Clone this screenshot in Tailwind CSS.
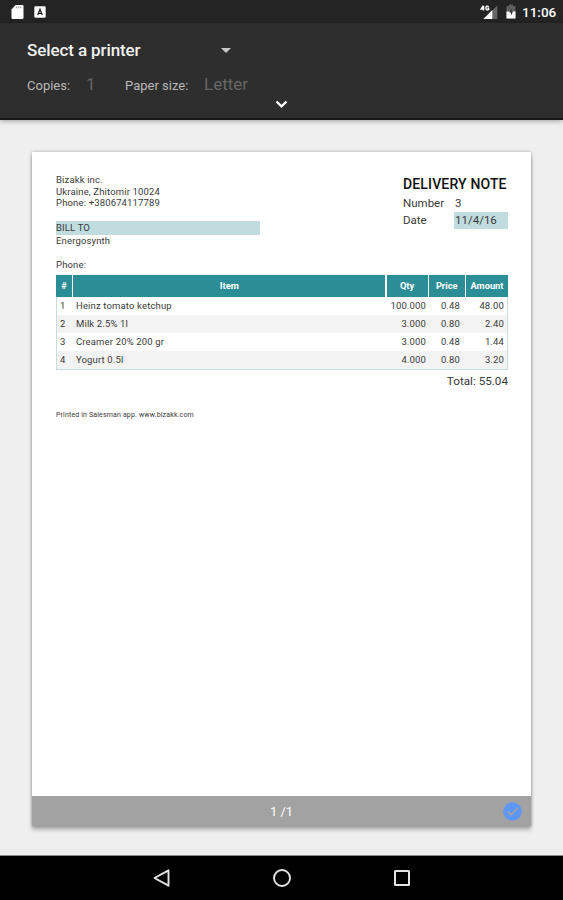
<!DOCTYPE html>
<html lang="en">
<head>
<meta charset="utf-8">
<title>Print preview</title>
<script src="https://cdn.jsdelivr.net/npm/@tailwindcss/browser@4"></script>
</head>
<body class="w-[563px] h-[900px] overflow-hidden bg-[#efefef] font-[Roboto,sans-serif] flex flex-col">
  <!-- Status bar -->
  <div class="h-[23px] shrink-0 bg-[#242424] flex items-center text-white pl-[11px] pr-[7px]">
    <svg class="w-[13px] h-[16px]" viewBox="0 0 13 16"><path d="M4.5 1H11.5Q12.5 1 12.5 2V14Q12.5 15 11.5 15H1.5Q.5 15 .5 14V5.5Z" fill="#fff"/><path d="M5.5 2.6v1.6M7.7 2.6v1.6M9.9 2.6v1.6" stroke="#999" stroke-width="1.2"/></svg>
    <svg class="w-[12px] h-[12px] ml-[10px]" viewBox="0 0 12 12"><rect x=".3" y=".3" width="11.4" height="11.4" rx="1.2" fill="#fff"/><path d="M3.7 9 6 3.2 8.3 9M4.5 7.3h3" fill="none" stroke="#242424" stroke-width="1.3"/></svg>
    <svg class="w-[18px] h-[16px] ml-auto" viewBox="0 0 18 16"><path d="M17.3 1.5V15H3.5Z" fill="#666"/><path d="M12.3 6V15H3.5Z" fill="#fff"/><path d="M3.3 1.6 1.2 5h3.2M3.5 2v4.6M8.8 2.6Q6.2 1.2 5.9 4 6 6.7 8.6 5.7V4.2H7.4" fill="none" stroke="#fff" stroke-width="1.4"/></svg>
    <svg class="w-[10px] h-[15px] ml-[8px]" viewBox="0 0 10 15"><path d="M3 .5H7V2H9.5V14.5H.5V2H3Z" fill="#5e5e5e"/><path d="M.5 7.5H9.5V14.5H.5Z" fill="#fff"/><path d="M5.5 4.5 3.2 8.6H5V11.5L7 7.5H5.5Z" fill="#242424"/></svg>
    <span class="ml-[6px] w-[34px] text-[13.5px] leading-[16px] font-medium whitespace-nowrap pt-px">11:06</span>
  </div>
  <!-- Print options -->
  <header class="h-[97px] shrink-0 bg-[#2e2e2e] border-b-2 border-[#181818] shadow-[0_1px_5px_rgba(0,0,0,0.35)] flex flex-col">
    <div class="mt-[17px] h-[20px] pl-[27px] flex items-center">
      <span class="w-[194px] text-[17px] leading-[20px] font-medium tracking-[-0.1px] text-[#f2f2f2]">Select a printer</span>
      <svg class="w-[10px] h-[5px]" viewBox="0 0 10 5"><path d="M0 0H10L5 5Z" fill="#c8c8c8"/></svg>
    </div>
    <div class="mt-[14px] h-[20px] pl-[27px] flex items-center text-[13px] leading-[20px] text-[#b8b8b8]">
      <span class="w-[59px] pt-[3px]">Copies:</span>
      <span class="w-[39px] text-[17px] text-[#666]">1</span>
      <span class="w-[79px] pt-[3px]">Paper size:</span>
      <span class="text-[17px] text-[#666]">Letter</span>
    </div>
    <svg class="w-[13px] h-[9px] mt-[6px] ml-[275px]" viewBox="0 0 13 9"><path d="M1.5 1.5 6.5 6.4 11.5 1.5" fill="none" stroke="#fff" stroke-width="2.2"/></svg>
  </header>
  <!-- Preview -->
  <main class="h-[736px] shrink-0 pt-[32px] pl-[32px] border-b border-[#8a8a8a]">
    <section class="w-[499px] h-[674px] bg-white shadow-[0_0_3px_rgba(0,0,0,0.3),0_4px_4px_rgba(0,0,0,0.25)] flex flex-col text-[#3a3a3a]">
      <div class="flex justify-between pl-[24px] pr-[23px] pt-[22px] h-[123px]">
        <div class="w-[204px] text-[9.5px] leading-[11.5px] tracking-[0.15px]">
          <p>Bizakk inc.</p>
          <p>Ukraine, Zhitomir 10024</p>
          <p>Phone: +380674117789</p>
          <p class="mt-[12.5px] h-[14px] leading-[14px] bg-[#c0dcdf]">BILL TO</p>
          <p>Energosynth</p>
          <p class="mt-[12px]">Phone:</p>
        </div>
        <div class="w-[105px] text-[11.5px]">
          <h1 class="mt-px text-[14px] leading-[18px] font-medium text-[#111] tracking-[0.15px] whitespace-nowrap">DELIVERY NOTE</h1>
          <div class="grid grid-cols-[51px_54px] mt-[2px] leading-[17px]">
            <span>Number</span><span class="pl-[1px]">3</span>
            <span>Date</span><span class="bg-[#c0dcdf] pl-[1px]">11/4/16</span>
          </div>
        </div>
      </div>
      <div class="ml-[24px] w-[452px] border border-t-0 border-[#c5dedd] text-[9.5px] tracking-[0.15px]">
        <div class="-mx-px h-[22px] grid grid-cols-[16px_312px_41px_36px_42px] gap-x-[1.25px] bg-white text-white font-bold text-[9.3px] tracking-normal text-center leading-[22px] [&>*]:bg-[#2b8d95]">
          <span>#</span><span>Item</span><span>Qty</span><span>Price</span><span>Amount</span>
        </div>
        <div class="h-[18px] leading-[17px] grid grid-cols-[16px_312px_41px_34px_44px]"><span class="pl-[3px]">1</span><span class="pl-[3px]">Heinz tomato ketchup</span><span class="text-right">100.000</span><span class="text-right">0.48</span><span class="text-right">48.00</span></div>
        <div class="h-[18px] leading-[17px] bg-[#f3f3f3] grid grid-cols-[16px_312px_41px_34px_44px]"><span class="pl-[3px]">2</span><span class="pl-[3px]">Milk 2.5% 1l</span><span class="text-right">3.000</span><span class="text-right">0.80</span><span class="text-right">2.40</span></div>
        <div class="h-[18px] leading-[17px] grid grid-cols-[16px_312px_41px_34px_44px]"><span class="pl-[3px]">3</span><span class="pl-[3px]">Creamer 20% 200 gr</span><span class="text-right">3.000</span><span class="text-right">0.48</span><span class="text-right">1.44</span></div>
        <div class="h-[18px] leading-[17px] bg-[#f3f3f3] grid grid-cols-[16px_312px_41px_34px_44px]"><span class="pl-[3px]">4</span><span class="pl-[3px]">Yogurt 0.5l</span><span class="text-right">4.000</span><span class="text-right">0.80</span><span class="text-right">3.20</span></div>
      </div>
      <p class="mt-[3px] pr-[23px] text-right text-[11.7px] leading-[16px]">Total: 55.04</p>
      <p class="mt-[21px] pl-[24px] text-[7px] tracking-[0.15px] leading-[10px]">Printed in Salesman app. www.bizakk.com</p>
      <footer class="mt-auto h-[30px] bg-[#a2a2a2] grid grid-cols-[1fr_auto_1fr] items-center text-white">
        <span></span>
        <span class="text-[13px] leading-[16px] pt-px">1 /1</span>
        <svg class="w-[19px] h-[19px] justify-self-end mr-[9px]" viewBox="0 0 19 19"><circle cx="9.5" cy="9.5" r="9.2" fill="#5c97f5"/><path d="M4.5 9.3 8 12.8 15 5.8" fill="none" stroke="#a2a2a2" stroke-width="1.6"/></svg>
      </footer>
    </section>
  </main>
  <!-- Navigation bar -->
  <nav class="flex-1 bg-black flex items-center justify-center gap-[100px]">
    <svg class="w-[20px] h-[20px]" viewBox="0 0 20 20"><path d="M16.5 2.3V17.7L2.5 10Z" fill="none" stroke="#e4e4e4" stroke-width="1.9" stroke-linejoin="round"/></svg>
    <svg class="w-[20px] h-[20px]" viewBox="0 0 20 20"><circle cx="10" cy="10" r="8" fill="none" stroke="#e4e4e4" stroke-width="1.9"/></svg>
    <svg class="w-[20px] h-[20px]" viewBox="0 0 20 20"><rect x="3" y="3" width="14" height="14" rx=".5" fill="none" stroke="#e4e4e4" stroke-width="2"/></svg>
  </nav>
</body>
</html>
